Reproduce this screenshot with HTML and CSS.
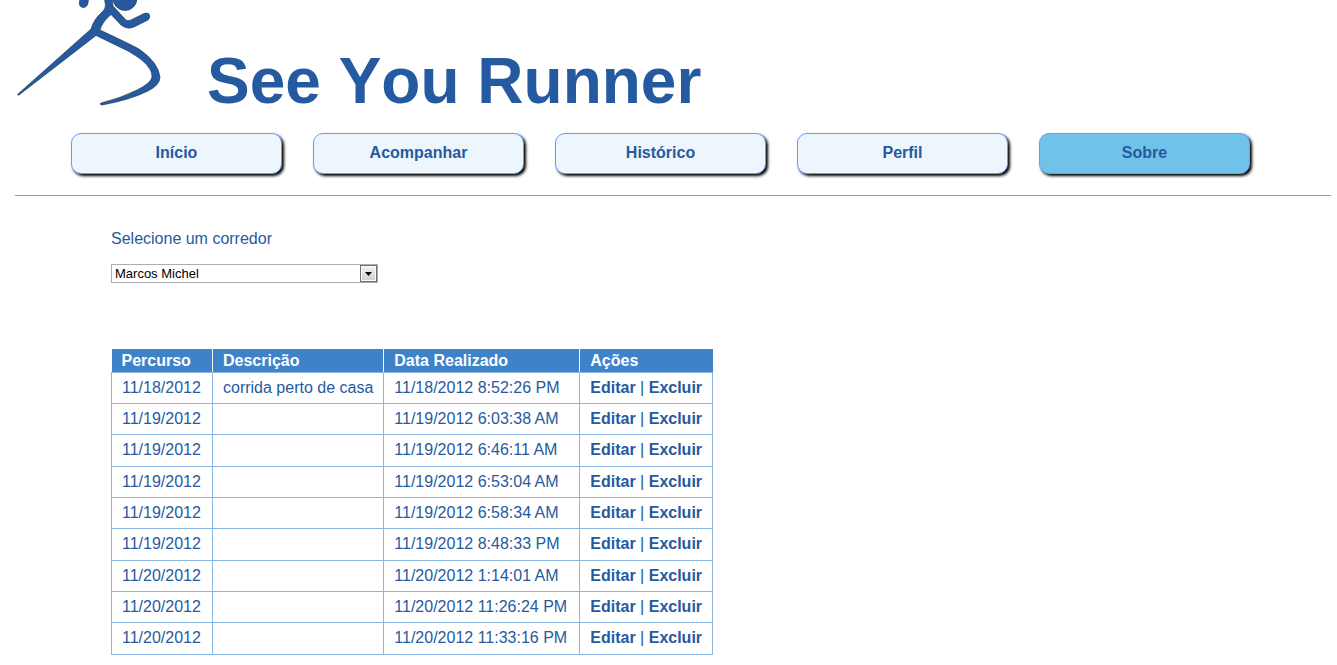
FILE: index.html
```html
<!DOCTYPE html>
<html lang="pt-BR">
<head>
<meta charset="utf-8">
<title>See You Runner</title>
<link rel="stylesheet" href="styles.css">
</head>
<body>
<header class="header">
  <svg class="logo" viewBox="0 0 180 112" width="180" height="112" aria-hidden="true">
    <g fill="#265aa0" stroke="#1b2b40" stroke-width="0.6">
      <path d="M80.500 -4 L79.300 2.500 Q79 7 83 7.500 Q87 7.500 88 3 L89 -4 Z"/>
      <path d="M104 -4 L105.500 5 Q105.500 9 102 12 Q94 19 91 29 L18 94 Q17 95.500 19 95 L96 35.500 L128 51 Q153 65 152 77 Q151 83 137 90 Q121 98 101 103 Q99 104.500 102 105 Q130 100 148 91 Q160 85 160 77 Q158 62 139 49 Q130 44 100 30 Q102 22 111 14.500 L121 25 Q127 30 134 27 L148 20 Q151 17 149 14 Q147 12.500 144 13.500 L131 20 Q128 21 126 20 L113 6 L112 -4 Z"/>
      <circle cx="125" cy="-1.500" r="12"/>
    </g>
  </svg>
  <h1 class="title">See You Runner</h1>
</header>
<nav class="nav">
  <a class="nav-link" href="#inicio">Início</a>
  <a class="nav-link" href="#acompanhar">Acompanhar</a>
  <a class="nav-link" href="#historico">Histórico</a>
  <a class="nav-link" href="#perfil">Perfil</a>
  <a class="nav-link nav-link-active" href="#sobre">Sobre</a>
</nav>
<main class="content">
  <label class="runner-label" for="runner">Selecione um corredor</label>
  <div class="select-box">
    <select class="runner-select" id="runner"><option>Marcos Michel</option></select>
    <span class="select-arrow" aria-hidden="true"><svg width="7" height="4" viewBox="0 0 7 4"><path d="M0 0H7L3.500 4Z"/></svg></span>
  </div>
  <table class="runs">
    <colgroup><col class="col-route"><col class="col-text"><col class="col-date"><col class="col-actions"></colgroup>
    <thead>
      <tr><th>Percurso</th><th>Descrição</th><th>Data Realizado</th><th>Ações</th></tr>
    </thead>
    <tbody>
      <tr><td>11/18/2012</td><td>corrida perto de casa</td><td>11/18/2012 8:52:26 PM</td><td><a href="#editar">Editar</a> | <a href="#excluir">Excluir</a></td></tr>
      <tr><td>11/19/2012</td><td></td><td>11/19/2012 6:03:38 AM</td><td><a href="#editar">Editar</a> | <a href="#excluir">Excluir</a></td></tr>
      <tr><td>11/19/2012</td><td></td><td>11/19/2012 6:46:11 AM</td><td><a href="#editar">Editar</a> | <a href="#excluir">Excluir</a></td></tr>
      <tr><td>11/19/2012</td><td></td><td>11/19/2012 6:53:04 AM</td><td><a href="#editar">Editar</a> | <a href="#excluir">Excluir</a></td></tr>
      <tr><td>11/19/2012</td><td></td><td>11/19/2012 6:58:34 AM</td><td><a href="#editar">Editar</a> | <a href="#excluir">Excluir</a></td></tr>
      <tr><td>11/19/2012</td><td></td><td>11/19/2012 8:48:33 PM</td><td><a href="#editar">Editar</a> | <a href="#excluir">Excluir</a></td></tr>
      <tr><td>11/20/2012</td><td></td><td>11/20/2012 1:14:01 AM</td><td><a href="#editar">Editar</a> | <a href="#excluir">Excluir</a></td></tr>
      <tr><td>11/20/2012</td><td></td><td>11/20/2012 11:26:24 PM</td><td><a href="#editar">Editar</a> | <a href="#excluir">Excluir</a></td></tr>
      <tr><td>11/20/2012</td><td></td><td>11/20/2012 11:33:16 PM</td><td><a href="#editar">Editar</a> | <a href="#excluir">Excluir</a></td></tr>
    </tbody>
  </table>
</main>
</body>
</html>
```
FILE: styles.css
```css
body {
  margin: 0;
  background: #fff;
  color: #265aa0;
  font: 16px/20px "Liberation Sans", Arial, sans-serif;
}

.header {
  display: flex;
  align-items: flex-end;
  gap: 27px;
  height: 117px;
}

.logo {
  align-self: flex-start;
}

.title {
  margin: 0;
  font-size: 64px;
  font-kerning: none;
  line-height: 72px;
}

.nav {
  display: flex;
  flex-wrap: wrap;
  gap: 31px;
  margin: 0 6px 0 15px;
  padding: 16px 56px 21px;
  border-bottom: 1px solid #9b9b9b;
}

.nav-link {
  box-sizing: border-box;
  width: 211px;
  padding: 9px 8px 10px;
  border: 1px solid #6a9df0;
  border-radius: 10px;
  background: #edf5fd;
  box-shadow: 2px 2px 3px #000;
  color: #265aa0;
  font-weight: bold;
  text-align: center;
  text-decoration: none;
}

.nav-link-active {
  background: #70c2e8;
}

.content {
  padding: 33px 111px 10px;
}

.runner-label {
  display: block;
}

.select-box {
  display: grid;
  width: 267px;
  margin: 15px 0 66px;
}

.runner-select {
  grid-area: 1 / 1;
  appearance: none;
  box-sizing: border-box;
  width: 100%;
  height: 19px;
  padding: 0 20px 0 3px;
  border: 1px solid #abadb3;
  border-radius: 0;
  background: #fff;
  color: #000;
  font: 13px/16px "Liberation Sans", Arial, sans-serif;
}

.select-arrow {
  grid-area: 1 / 1;
  justify-self: end;
  display: grid;
  place-items: center;
  box-sizing: border-box;
  width: 17px;
  margin: 1px 1px 1px 0;
  border: 1px solid #707070;
  background: linear-gradient(#f2f2f2, #cfcfcf);
  box-shadow: inset 0 0 0 1px #fcfcfc;
  pointer-events: none;
}

.runs {
  border-collapse: collapse;
  white-space: nowrap;
}

.col-route {
  width: 101px;
}

.col-text {
  width: 171px;
}

.col-date {
  width: 196px;
}

.col-actions {
  width: 133px;
}

.runs th {
  padding: 2px 10px 1px;
  border-right: 1px solid #fff;
  border-bottom: 1px solid #8cb6e2;
  background: #3e82ca;
  color: #fff;
  text-align: left;
}

.runs th:last-child {
  border-right-color: #3e82ca;
}

.runs td {
  padding: 5px 10px;
  border: 1px solid #8cb6e2;
}

.runs tbody tr:nth-child(3n) td {
  padding-bottom: 6px;
}

.runs a {
  color: #265aa0;
  font-weight: bold;
  text-decoration: none;
}
```
